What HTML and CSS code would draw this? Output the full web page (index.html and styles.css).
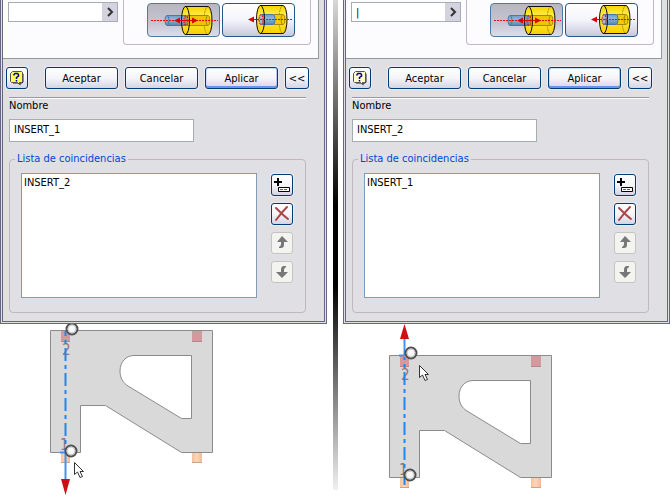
FILE: index.html
```
<!DOCTYPE html>
<html lang="es">
<head>
  <meta charset="UTF-8">
  <title>Insertar coincidencias</title>
  <link rel="stylesheet" href="styles.css">
</head>
<body>
  <!-- shared drawings -->
  <svg class="defs" width="0" height="0" aria-hidden="true">
    <defs>
      <linearGradient id="yellow" x1="0" y1="0" x2="0" y2="1">
        <stop offset="0" stop-color="#f7d300"/>
        <stop offset=".35" stop-color="#fff04a"/>
        <stop offset="1" stop-color="#f8d000"/>
      </linearGradient>
      <linearGradient id="blue" x1="0" y1="0" x2="0" y2="1">
        <stop offset="0" stop-color="#6b9cc6"/>
        <stop offset=".4" stop-color="#8fb8da"/>
        <stop offset="1" stop-color="#5585b1"/>
      </linearGradient>
      <linearGradient id="peg">
        <stop offset="0" stop-color="#f5c3a0"/>
        <stop offset=".5" stop-color="#fdd6b8"/>
        <stop offset="1" stop-color="#eebb98"/>
      </linearGradient>
      <radialGradient id="ball" cx=".45" cy=".4" r=".6">
        <stop offset="0" stop-color="#fff"/>
        <stop offset=".6" stop-color="#f4f4f4"/>
        <stop offset="1" stop-color="#b5b5b5"/>
      </radialGradient>

      <symbol id="insert-opposed" viewBox="0 0 73 34">
        <path d="M38 3.500H61A4 14 0 0 1 61 31.500H38A4 14 0 0 1 38 3.500Z" fill="url(#yellow)"/>
        <path d="M61 3.500A4 14 0 0 0 61 31.500" fill="none" stroke="#a38600" stroke-dasharray="2 1"/>
        <path d="M40 12.500H61A2 5 0 0 1 61 22.500H40Z" fill="#eec600" stroke="#a88900"/>
        <path d="M61 12.500A2 5 0 0 0 61 22.500" fill="none" stroke="#a88900"/>
        <path d="M20 12.500H39V22.500H20A2 5 0 0 1 20 12.500Z" fill="url(#blue)" stroke="#4a79a5"/>
        <path d="M20 12.500A2 5 0 0 1 20 22.500" fill="none" stroke="#4a79a5"/>
        <ellipse cx="38.500" cy="17.500" rx="4" ry="14" fill="none" stroke="#111"/>
        <path d="M38 3.500H61A4 14 0 0 1 61 31.500H38" fill="none" stroke="#111"/>
        <ellipse cx="39" cy="17.500" rx="2" ry="5" fill="none" stroke="#e00000" stroke-dasharray="2 1"/>
        <path d="M4 17.500H71" stroke="#f00000" stroke-dasharray="2 1"/>
        <path d="M32 17.500H47" stroke="#e00000"/>
        <path d="M27 17.500L33 14.500V20.500ZM51 17.500L45 14.500V20.500Z" fill="#e00000"/>
      </symbol>

      <symbol id="insert-aligned" viewBox="0 0 73 34">
        <path d="M38 2.500H61A4 14 0 0 1 61 30.500H38A4 14 0 0 1 38 2.500Z" fill="url(#yellow)"/>
        <path d="M61 2.500A4 14 0 0 0 61 30.500" fill="none" stroke="#a38600" stroke-dasharray="2 1"/>
        <path d="M52 11.500H61A2 5 0 0 1 61 21.500H52Z" fill="#f3cb00" stroke="#a88900"/>
        <path d="M61 11.500A2 5 0 0 0 61 21.500" fill="none" stroke="#a88900"/>
        <path d="M39 11.500H51A2 5 0 0 1 51 21.500H39Z" fill="url(#blue)" stroke="#4a79a5"/>
        <ellipse cx="38.500" cy="16.500" rx="4" ry="14" fill="none" stroke="#111"/>
        <path d="M38 2.500H61A4 14 0 0 1 61 30.500H38" fill="none" stroke="#111"/>
        <ellipse cx="39" cy="16.500" rx="2" ry="5" fill="#a9b6d0" stroke="#e00000" stroke-dasharray="2 1"/>
        <path d="M32 16.500H71" stroke="#f00000" stroke-dasharray="2 1"/>
        <path d="M26 16.500L32 13.500V19.500Z" fill="#e00000"/>
      </symbol>

      <symbol id="help" viewBox="0 0 16 16">
        <path d="M4 2.500H13L14.500 4V12L13 13.500H11.500V15.500L9 13.500H4Z" fill="#222"/>
        <path d="M3.500 1.500H12.500L13.500 2.500V11.500L12.500 12.500H10.500V14.500L8.500 12.500H2.500L1.500 11.500V3.500Z" fill="currentColor" stroke="#555"/>
        <path d="M5 5.500V4.500L6 3.500H8.500L9.500 4.500V6L7.500 7.500V9M7.500 10V11.500" fill="none" stroke="#00007f" stroke-width="1.500"/>
      </symbol>

      <symbol id="add" viewBox="0 0 20 20">
        <path d="M2 7H10M6 3V11" stroke="#000" stroke-width="2"/>
        <path d="M6.500 12.500H17.500V16.500H6.500Z" fill="#fff" stroke="#000"/>
        <path d="M8 14.500H16" stroke="#2a62d0" stroke-dasharray="3 1"/>
      </symbol>

      <symbol id="remove" viewBox="0 0 20 20">
        <path d="M4 4C8 8 12 12 16 15M15 3C11 7 7 12 4 16" fill="none" stroke="#ad4646" stroke-width="2" stroke-linecap="round"/>
      </symbol>

      <symbol id="up" viewBox="0 0 20 20">
        <path d="M10 3L16 9H12V12Q12 15 9 15H7V14Q9 13 9 11V9H5Z" fill="#777"/>
      </symbol>

      <symbol id="down" viewBox="0 0 20 20">
        <path d="M10 16L4 10H9V8Q9 4 12 4H14V5Q12 6 12 8V10H16Z" fill="#777"/>
      </symbol>

      <!-- bracket with its four pegs -->
      <g id="bracket">
        <path d="M.5.5H162.500V122.500H131.500L55.500 75.500H30.500V122.500H.5ZM84 25.500C76 25.500 70 32 70 41C70 48 73 53 78 56L131.500 88.500H141.500V25.500Z" fill="#d9d9da" fill-rule="evenodd" stroke="#8b8b8b"/>
        <path d="M11 1H20V12H11ZM142 1H152V12H142Z" fill="#d29a9e"/>
        <path d="M11 11.500H20M142 11.500H152" stroke="#b98589"/>
        <rect x="11" y="123" width="9" height="10" fill="url(#peg)"/>
        <rect x="142" y="123" width="10" height="10" fill="url(#peg)"/>
        <path d="M11 132.500H20M142 132.500H152" stroke="#c9a58c"/>
        <text x="12" y="25" class="mark">2</text>
        <text x="10" y="120" class="mark">1</text>
      </g>

      <g id="point">
        <circle r="5.500" fill="url(#ball)" stroke="#505050" stroke-width="2"/>
        <circle r="4" fill="none" stroke="#c6c6c6"/>
      </g>

      <path id="cursor" d="M.5.500V12.500L3.500 10L6 15.500L8.500 14.500L6 9.500H9.500Z" fill="#fff" stroke="#333"/>
    </defs>
  </svg>

  <main class="compare">
    <section class="pane">
      <form class="dialog">
        <div class="tab">
          <div class="combo">
            <input type="text" aria-label="Desfase">
            <button type="button" aria-label="Opciones"><svg width="8" height="10" viewBox="0 0 8 10"><path d="M2 1L6 5L2 9" fill="none" stroke="#333" stroke-width="2"/></svg></button>
          </div>
          <div class="solution">
            <button type="button" class="toggle on" aria-label="Opuesta" aria-pressed="true"><svg><use href="#insert-opposed"/></svg></button>
            <button type="button" class="toggle" aria-label="Alineada" aria-pressed="false"><svg><use href="#insert-aligned"/></svg></button>
          </div>
        </div>

        <div class="actions">
          <button type="button" class="btn help" aria-label="Ayuda"><svg width="16" height="16"><use href="#help"/></svg></button>
          <button type="button" class="btn">Aceptar</button>
          <button type="button" class="btn">Cancelar</button>
          <button type="button" class="btn default">Aplicar</button>
          <button type="button" class="btn less">&lt;&lt;</button>
        </div>

        <div class="more">
          <hr>
          <label for="name-1">Nombre</label>
          <input type="text" class="name" id="name-1" value="INSERT_1">

          <fieldset>
            <legend>Lista de coincidencias</legend>
            <select multiple size="6" aria-label="Lista de coincidencias">
              <option>INSERT_2</option>
            </select>
            <div class="tools">
              <button type="button" class="btn" aria-label="Agregar"><svg width="20" height="20"><use href="#add"/></svg></button>
              <button type="button" class="btn" aria-label="Eliminar"><svg width="20" height="20"><use href="#remove"/></svg></button>
              <button type="button" class="btn" aria-label="Subir" disabled><svg width="20" height="20"><use href="#up"/></svg></button>
              <button type="button" class="btn" aria-label="Bajar" disabled><svg width="20" height="20"><use href="#down"/></svg></button>
            </div>
          </fieldset>
        </div>
      </form>

      <svg class="part" width="320" height="175" viewBox="0 0 320 175">
        <use href="#bracket" x="50" y="6"/>
        <path d="M65.500 7V130" stroke="#1e86f0" stroke-width="2" stroke-dasharray="13 4 4 4" stroke-dashoffset="8"/>
        <path d="M65.500 128V156M60 128.500H65" stroke="#3f93f3" stroke-width="2"/>
        <path d="M61 155H70L65.500 171Z" fill="#cc1014"/>
        <use href="#point" x="72" y="5"/>
        <use href="#point" x="71" y="127"/>
        <use href="#cursor" x="74" y="138"/>
      </svg>
    </section>

    <div class="divider"></div>

    <section class="pane">
      <form class="dialog">
        <div class="tab">
          <div class="combo">
            <input type="text" aria-label="Desfase" value="|">
            <button type="button" aria-label="Opciones"><svg width="8" height="10" viewBox="0 0 8 10"><path d="M2 1L6 5L2 9" fill="none" stroke="#333" stroke-width="2"/></svg></button>
          </div>
          <div class="solution">
            <button type="button" class="toggle on" aria-label="Opuesta" aria-pressed="true"><svg><use href="#insert-opposed"/></svg></button>
            <button type="button" class="toggle" aria-label="Alineada" aria-pressed="false"><svg><use href="#insert-aligned"/></svg></button>
          </div>
        </div>

        <div class="actions">
          <button type="button" class="btn help pale" aria-label="Ayuda"><svg width="16" height="16"><use href="#help"/></svg></button>
          <button type="button" class="btn">Aceptar</button>
          <button type="button" class="btn">Cancelar</button>
          <button type="button" class="btn default">Aplicar</button>
          <button type="button" class="btn less">&lt;&lt;</button>
        </div>

        <div class="more">
          <hr>
          <label for="name-2">Nombre</label>
          <input type="text" class="name" id="name-2" value="INSERT_2">

          <fieldset>
            <legend>Lista de coincidencias</legend>
            <select multiple size="6" aria-label="Lista de coincidencias">
              <option>INSERT_1</option>
            </select>
            <div class="tools">
              <button type="button" class="btn" aria-label="Agregar"><svg width="20" height="20"><use href="#add"/></svg></button>
              <button type="button" class="btn" aria-label="Eliminar"><svg width="20" height="20"><use href="#remove"/></svg></button>
              <button type="button" class="btn" aria-label="Subir" disabled><svg width="20" height="20"><use href="#up"/></svg></button>
              <button type="button" class="btn" aria-label="Bajar" disabled><svg width="20" height="20"><use href="#down"/></svg></button>
            </div>
          </fieldset>
        </div>
      </form>

      <svg class="part" width="320" height="175" viewBox="0 0 320 175">
        <use href="#bracket" x="46" y="31"/>
        <path d="M61.500 33V164" stroke="#1e86f0" stroke-width="2" stroke-dasharray="13 4 4 4" stroke-dashoffset="10"/>
        <path d="M61.500 14V32M56 31.500H61" stroke="#3f93f3" stroke-width="2"/>
        <path d="M57 15H66L61.500 0Z" fill="#cc1014"/>
        <use href="#point" x="68" y="29"/>
        <use href="#point" x="67" y="151"/>
        <use href="#cursor" x="76" y="41"/>
      </svg>
    </section>
  </main>
</body>
</html>
```
FILE: styles.css
```
* { box-sizing: border-box; }
body { margin: 0; background: #fff; color: #000; font: 11px/13px "DejaVu Sans Condensed", "DejaVu Sans", sans-serif; }
button, input, select { font: inherit; color: inherit; margin: 0; }
svg { display: block; }
.defs { position: absolute; }

.compare { display: flex; padding-right: 2px; }
.pane { flex: 1; min-width: 0; }
.divider { width: 5px; margin: 0 5px 9px 6px; background: linear-gradient(#d8d8d8, #000 42%, #000 58%, #f0f0f0); }

.dialog { border: 3px double #66667f; border-top: 0; background: #e0dfe3; }

/* upper tab page */
.tab { display: flex; align-items: flex-start; gap: 5px; margin-right: 5px; padding: 0 7px 13px 5px; background: #fcfcfe; border: solid #919b9c; border-width: 0 1px 1px 0; }
.combo { flex: 1; display: flex; min-width: 0; height: 20px; margin-top: 2px; border: 1px solid #a5acb2; background: #fff; }
.combo input { flex: 1; min-width: 0; padding: 0 4px; border: 0; background: none; }
.combo button { display: flex; align-items: center; justify-content: center; width: 15px; padding: 0; border: 0; background: #d3d2de; }
.solution { display: flex; gap: 2px; padding: 3px 15px 7px 23px; border: 1px solid #bfb8bf; border-top: 0; border-radius: 0 0 4px 4px; }
.toggle { width: 73px; height: 34px; padding: 0; border: 1px solid #24588a; border-radius: 4px; background: linear-gradient(#fff, #f4f4fb 50%, #c9c8dc); }
.toggle.on { border-color: #4f7ba3; background: linear-gradient(#b7b6c3, #c6c5d2 60%, #dddce6); }
.toggle svg { width: 73px; height: 34px; margin: -1px; }

/* buttons */
.btn { width: 73px; height: 22px; padding: 0; border: 1px solid #003c74; border-radius: 3px; background: linear-gradient(#fff, #f5f5fa 50%, #d5d4e3); box-shadow: 0 0 0 1px #eceaf0; }
.btn.default { box-shadow: 0 0 0 1px #eceaf0, inset 0 -2px #6d94ea, inset 1px 1px #cbdcfa, inset -1px 0 #b5c8f0; }
.btn:disabled { border-color: #c5c4c0; background: #f3f3ef; box-shadow: none; }
.actions { display: flex; gap: 7px; padding: 8px 0 0 3px; }
.help { width: 22px; margin-right: 10px; color: #ffff5c; }
.help.pale { color: #fffbd0; }
.help svg { margin: auto; }
.less { width: 24px; }

/* expanded part */
.more { padding: 8px 18px 8px 6px; }
.more hr { margin: 0; border: solid; border-color: #9a98a2 #fff #fff; border-width: 1px 0; }
.more label { display: block; }
.name { display: block; width: 185px; height: 23px; margin-top: 7px; padding: 0 4px 2px; border: 1px solid #a5acb2; background: #fff; }
fieldset { display: flex; gap: 14px; margin: 10px 0 0; padding: 7px 12px 14px 11px; border: 1px solid #bfb8bf; border-radius: 4px; }
legend { margin-left: -6px; padding: 0 2px; line-height: 14px; color: #0046d5; }
select { flex: 1; min-width: 0; height: 125px; padding: 0; border: 1px solid #7f9db9; border-radius: 0; background: #fff; overflow: hidden; }
option { padding: 2px; }
.tools { display: flex; flex-direction: column; gap: 7px; padding-top: 1px; }
.tools .btn { width: 22px; }

/* drawing below the dialog */
.part { max-width: 100%; }
.mark { font: 15px "DejaVu Sans Condensed", sans-serif; fill: #98747b; }
```
